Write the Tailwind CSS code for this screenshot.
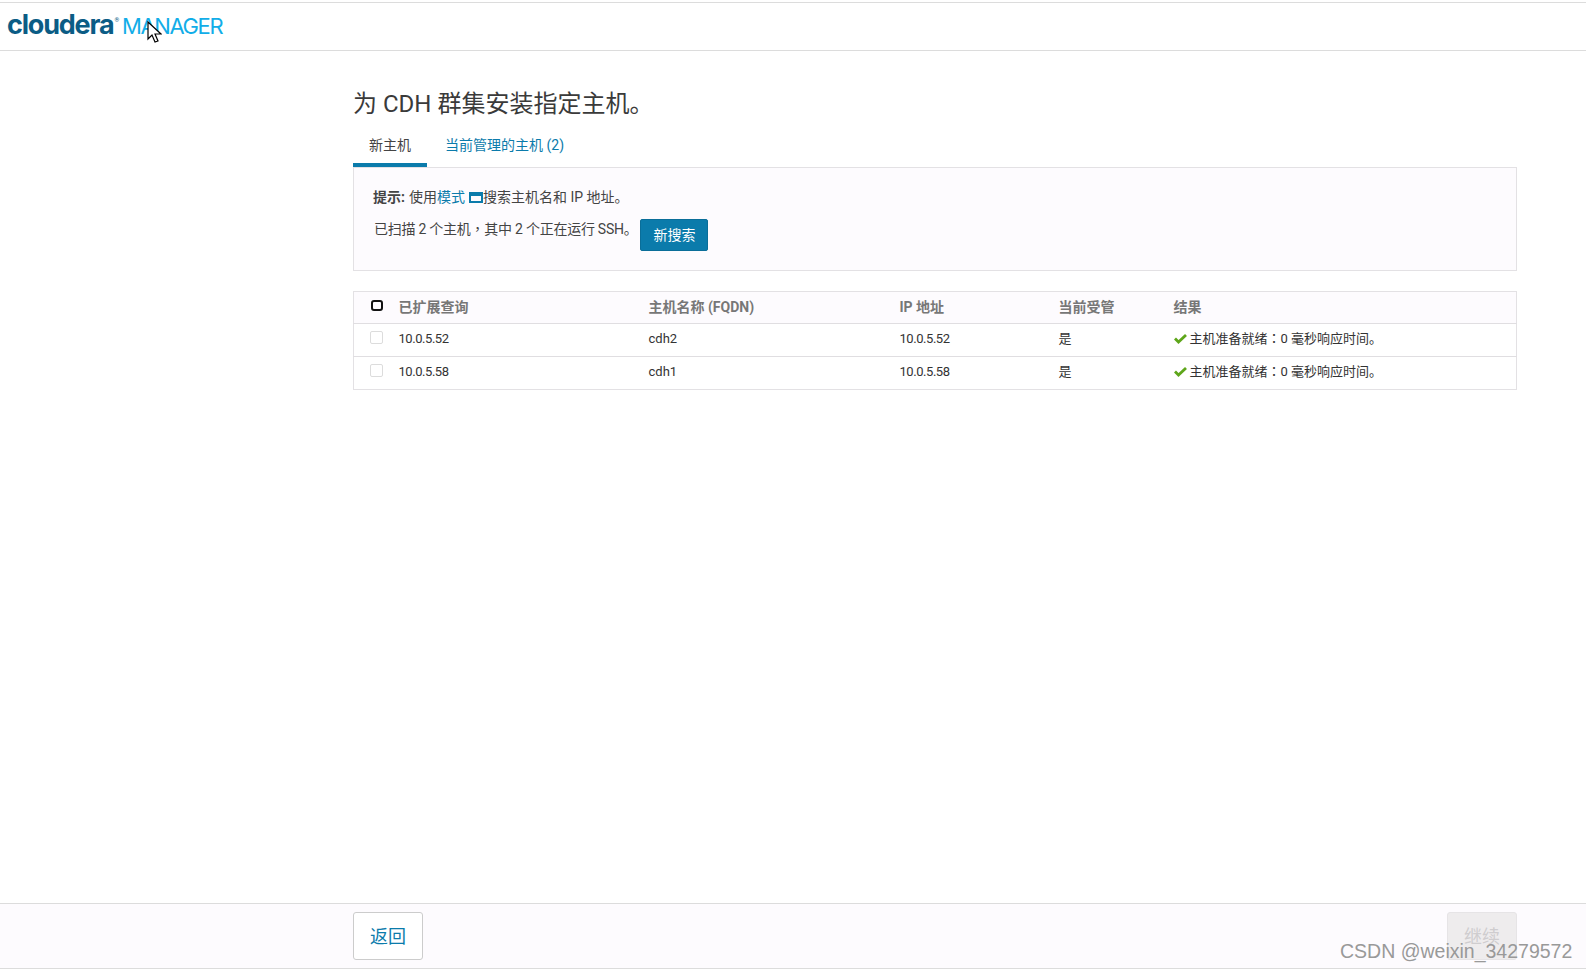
<!DOCTYPE html>
<html lang="zh-CN">
<head>
    <meta charset="UTF-8">
    <title>Cloudera Manager</title>
    <script src="https://cdn.jsdelivr.net/npm/@tailwindcss/browser@4"></script>
</head>
<body class="bg-white overflow-hidden font-['Roboto','Noto_Sans_CJK_SC',sans-serif] text-[#333]">
<div class="relative h-[970px] flex flex-col">

    <!-- Top bar -->
    <header class="mt-[2px] h-[49px] border-y border-[#dcdcdc] flex items-center pl-[7px] shrink-0">
        <div class="flex items-center -mt-[4px]">
            <span class="font-['Inter',sans-serif] font-bold text-[27px] tracking-[-1.2px] leading-none text-[#0b5c85]">cloudera</span>
            <span class="text-[6px] text-[#0b5c85] self-start mt-[4px] ml-[1px]">®</span>
            <span class="font-['Inter',sans-serif] font-normal text-[22px] tracking-[-1.4px] leading-none text-[#12ade8] ml-[3px] mt-[3px]">MANAGER</span>
        </div>
    </header>

    <!-- Main -->
    <main class="ml-[353px] w-[1164px] flex-1">
        <h1 class="mt-[36px] text-[24px] leading-[34px] font-normal text-[#3a3a3a]">为 CDH 群集安装指定主机。</h1>

        <nav class="mt-[5px] flex text-[14px] h-[41px]">
            <a class="w-[74px] text-center border-b-4 border-[#0b7bab] leading-[38px] text-[#444]">新主机</a>
            <a class="ml-[18px] leading-[38px] text-[#0b7bab]">当前管理的主机 (2)</a>
        </nav>

        <section class="h-[104px] border border-[#e3e1e4] bg-[#fdfbfe] pl-[19px] pt-[19px] text-[14px] text-[#444]">
            <p class="leading-[20px] flex items-center">
                <strong class="font-bold">提示:</strong>
                <span class="ml-1">使用</span><a class="text-[#0b7bab]">模式</a>
                <span class="inline-block ml-[4px] w-[14px] h-[11px] border-2 border-t-4 border-[#0b7bab]"></span>
                <span>搜索主机名和 IP 地址。</span>
            </p>
            <div class="mt-[12px] flex items-start">
                <span class="leading-[20px] ml-[1px] -mt-[1px] tracking-[-0.25px]">已扫描 2 个主机<span lang="zh-TW" class="font-['Noto_Sans_CJK_TC']">，</span>其中 2 个正在运行 SSH。</span>
                <button class="ml-[3px] w-[68px] h-[32px] rounded-[2px] bg-[#0b7bab] border border-[#0a6e99] text-white text-[14px]">新搜索</button>
            </div>
        </section>

        <table class="mt-[20px] w-full table-fixed border border-[#e3e1e4] border-collapse text-[13px] text-[#333]">
            <colgroup>
                <col class="w-[45px]"><col class="w-[250px]"><col class="w-[251px]"><col class="w-[159px]"><col class="w-[115px]"><col>
            </colgroup>
            <thead>
                <tr class="h-[32px] bg-[#fdfbfe] text-left text-[14px] text-[#777] border-b border-[#e0dee1]">
                    <th class="pl-[17px]"><span class="block w-[12px] h-[11px] -mt-[4px] border-2 border-[#111] rounded-[3px]"></span></th>
                    <th class="font-bold pb-[1px]">已扩展查询</th>
                    <th class="font-bold pb-[1px]">主机名称 (FQDN)</th>
                    <th class="font-bold pb-[1px]">IP 地址</th>
                    <th class="font-bold pb-[1px]">当前受管</th>
                    <th class="font-bold pb-[1px]">结果</th>
                </tr>
            </thead>
            <tbody>
                <tr class="h-[33px] border-b border-[#e0dee1]">
                    <td class="pl-[16px]"><span class="block w-[13px] h-[13px] -mt-[5px] border border-[#dcdcdc] rounded-[2px]"></span></td>
                    <td class="pb-[2px] tracking-[-0.45px]">10.0.5.52</td>
                    <td class="pb-[2px]">cdh2</td>
                    <td class="pb-[2px] tracking-[-0.45px]">10.0.5.52</td>
                    <td class="pb-[3px]">是</td>
                    <td class="pb-[4px]">
                        <span class="flex items-center">
                            <svg class="w-[13px] h-[11px] mr-[3px]" viewBox="0 0 13 11"><path d="M1 5.5l3.5 3.5L12 2" fill="none" stroke="#5ea61a" stroke-width="2.8"/></svg>
                            <span>主机准备就绪<span lang="zh-TW" class="font-['Noto_Sans_CJK_TC']">：</span>0 毫秒响应时间。</span>
                        </span>
                    </td>
                </tr>
                <tr class="h-[33px]">
                    <td class="pl-[16px]"><span class="block w-[13px] h-[13px] -mt-[5px] border border-[#dcdcdc] rounded-[2px]"></span></td>
                    <td class="pb-[2px] tracking-[-0.45px]">10.0.5.58</td>
                    <td class="pb-[2px]">cdh1</td>
                    <td class="pb-[2px] tracking-[-0.45px]">10.0.5.58</td>
                    <td class="pb-[3px]">是</td>
                    <td class="pb-[4px]">
                        <span class="flex items-center">
                            <svg class="w-[13px] h-[11px] mr-[3px]" viewBox="0 0 13 11"><path d="M1 5.5l3.5 3.5L12 2" fill="none" stroke="#5ea61a" stroke-width="2.8"/></svg>
                            <span>主机准备就绪<span lang="zh-TW" class="font-['Noto_Sans_CJK_TC']">：</span>0 毫秒响应时间。</span>
                        </span>
                    </td>
                </tr>
            </tbody>
        </table>
    </main>

    <!-- Footer -->
    <footer class="mb-[1px] h-[66px] shrink-0 border-y border-[#dcdcdc] bg-[#fdfbfe] pl-[353px] pr-[69px] pt-[8px] flex justify-between">
        <button class="w-[70px] h-[48px] rounded-[3px] bg-white border border-[#cccccc] text-[18px] text-[#0b7bab]">返回</button>
        <button class="w-[70px] h-[48px] rounded-[3px] bg-[#eeeced] border border-[#e6e4e6] text-[18px] text-[#cfcdcf]">继续</button>
    </footer>

    <!-- Mouse cursor over the logo -->
    <svg class="absolute left-[147px] top-[21px] w-[15px] h-[23px]" viewBox="0 0 15 23">
        <path d="M1 1v17l4-4 3 7 3-1-3-7h6z" fill="#fff" stroke="#000" stroke-width="1.2"/>
    </svg>

    <!-- Watermark -->
    <span class="absolute left-[1340px] top-[937px] text-[19.5px] leading-[28px] text-[#999] font-['Liberation_Sans',sans-serif]">CSDN @weixin_34279572</span>
</div>
</body>
</html>
